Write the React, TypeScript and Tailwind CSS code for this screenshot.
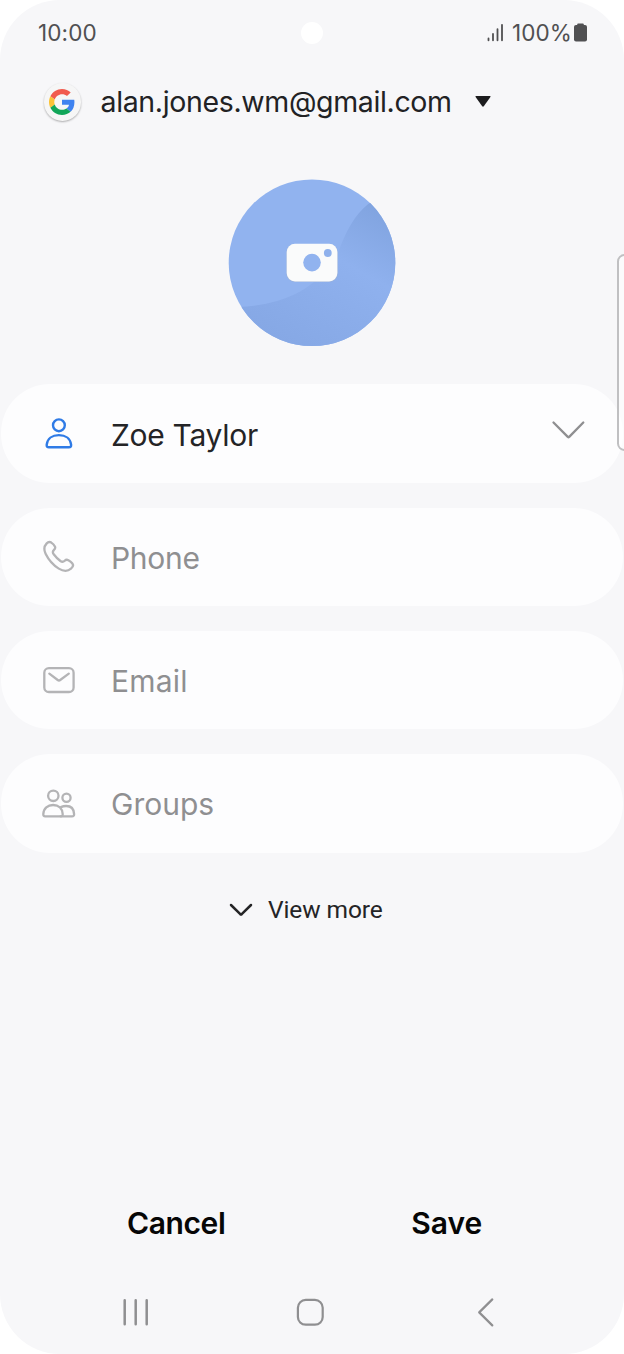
import React, { useState } from "react";

interface Field {
  key: string;
  placeholder: string;
  icon: React.ReactNode;
  spacing: string;
}

const PersonIcon = () => (
  <svg width="36" height="36" viewBox="0 0 36 36" fill="none" stroke="#2f7be6" strokeWidth="2.4" strokeLinejoin="round">
    <circle cx="18.9" cy="9.3" r="5.9" />
    <path d="M9 31.3H28.8C30.6 31.3 31.3 30.4 31.1 28.6C30.4 22.7 25.6 19.1 18.9 19.1S7.4 22.7 6.7 28.6C6.5 30.4 7.2 31.3 9 31.3Z" />
  </svg>
);

const PhoneIcon = () => (
  <svg width="36" height="36" viewBox="0 0 36 36" fill="none" stroke="#b4b4b6" strokeWidth="2.3" strokeLinecap="round" strokeLinejoin="round">
    <path d="M11.3 3.6C9.7 2.6 8 3 6.5 4.6C4 7.3 3.8 10.9 5.6 14.7C8.5 20.6 13.1 26 18.8 29.6C23 32.2 27.6 32.6 31 29.7C33.3 27.8 33.6 25.9 32.2 24.2C31.1 22.9 29.9 22 28.4 21.2C26.9 20.4 25.8 20.6 24.7 21.7C23.3 23.1 22 23.2 20.4 22C18 20.2 15.6 17.7 13.7 15.2C12.4 13.5 12.6 12.2 14 10.9C15.2 9.8 15.6 8.9 14.9 7.5C14.1 5.9 12.8 4.6 11.3 3.6Z" />
  </svg>
);

const MailIcon = () => (
  <svg width="36" height="36" viewBox="0 0 36 36" fill="none" stroke="#b4b4b6" strokeWidth="2.3" strokeLinecap="round" strokeLinejoin="round">
    <rect x="4.3" y="6.2" width="29.3" height="23.8" rx="4.6" />
    <path d="M9.3 11.6L17.7 18Q19 19 20.2 18L28.8 11.6" />
  </svg>
);

const GroupIcon = () => (
  <svg width="36" height="36" viewBox="0 0 36 36" fill="none" stroke="#b4b4b6" strokeWidth="2.3" strokeLinecap="round" strokeLinejoin="round">
    <circle cx="13.3" cy="10.8" r="5.2" />
    <circle cx="26.5" cy="12.7" r="4.1" />
    <path d="M5.2 31.3H20.6C22.1 31.3 22.8 30.6 22.7 29.1C22.4 23.5 18.5 20 13.1 20S3.6 23.5 3.3 29.1C3.2 30.6 3.8 31.3 5.2 31.3Z" />
    <path d="M20.9 22.1C22.6 21.3 24.2 21 26.2 21C30.9 21 33.9 23.8 34.1 29.1C34.2 30.6 33.5 31.3 32 31.3H20.6" />
  </svg>
);

const GoogleLogo = () => (
  <svg width="26" height="26" viewBox="0 0 48 48">
    <path fill="#f15b4e" d="M24 9.5c3.54 0 6.71 1.22 9.21 3.6l6.85-6.85C35.9 2.38 30.47 0 24 0 14.62 0 6.51 5.38 2.56 13.22l7.98 6.19C12.43 13.72 17.74 9.5 24 9.5z" />
    <path fill="#3f83f0" d="M46.98 24.55c0-1.57-.15-3.09-.38-4.55H24v9.02h12.94c-.58 2.96-2.26 5.48-4.78 7.18l7.73 6c4.51-4.18 7.09-10.36 7.09-17.65z" />
    <path fill="#fbc338" d="M10.53 28.59c-.48-1.45-.76-2.99-.76-4.59s.27-3.14.76-4.59l-7.98-6.19C.92 16.46 0 20.12 0 24c0 3.88.92 7.54 2.56 10.78l7.97-6.19z" />
    <path fill="#11a658" d="M24 48c6.48 0 11.93-2.13 15.89-5.81l-7.73-6c-2.15 1.45-4.92 2.3-8.16 2.3-6.26 0-11.57-4.22-13.47-9.91l-7.98 6.19C6.51 42.62 14.62 48 24 48z" />
  </svg>
);

const fields: Field[] = [
  { key: "phone", placeholder: "Phone", icon: <PhoneIcon />, spacing: "tracking-[-0.3px]" },
  { key: "email", placeholder: "Email", icon: <MailIcon />, spacing: "tracking-[0.2px]" },
  { key: "groups", placeholder: "Groups", icon: <GroupIcon />, spacing: "tracking-[0px]" },
];

function StatusBar() {
  return (
    <div className="flex h-[66px] items-center justify-between pr-[37px] pl-[38px] text-[#505052]">
      <span className="w-[120px] text-[22.5px] tracking-[0.1px]">10:00</span>
      <span className="mr-px size-[22px] rounded-full bg-white" />
      <div className="flex w-[120px] items-center justify-end">
        <svg width="18" height="20" viewBox="0 0 18 20" fill="none" stroke="#505052" strokeWidth="1.8" strokeLinecap="round" className="mr-[7px] shrink-0">
          <path d="M1.5 15.5V17.3M6 11V17.3M10.5 6.2V17.3M15 1.8V17.3" />
        </svg>
        <span className="text-[22.5px] tracking-[0.1px]">100%</span>
        <svg width="13" height="20" viewBox="0 0 13 20" fill="#505052" className="ml-[2px] shrink-0">
          <rect x="3.2" y="0.5" width="6.6" height="4" rx="1" />
          <rect x="0" y="2" width="13" height="16.5" rx="2" />
        </svg>
      </div>
    </div>
  );
}

function Avatar() {
  return (
    <button className="mx-auto mt-[39px] block size-[168px]">
      <svg width="168" height="168" viewBox="0 0 168 168">
        <defs>
          <clipPath id="avatar-clip">
            <circle cx="84" cy="83.7" r="83.3" />
          </clipPath>
          <linearGradient id="avatar-shade" x1="160" y1="25" x2="75" y2="175" gradientUnits="userSpaceOnUse">
            <stop offset="0" stopColor="#7fa2de" />
            <stop offset="0.42" stopColor="#8fb1ee" />
            <stop offset="1" stopColor="#86a8e5" />
          </linearGradient>
        </defs>
        <g clipPath="url(#avatar-clip)">
          <rect width="168" height="168" fill="#91b3ef" />
          <path d="M145 22C131 30 121 46 113 66C105 88 91 101 73 112C53 123 32 127 10 128V168H168V20Z" fill="url(#avatar-shade)" />
        </g>
        <rect x="58.4" y="65" width="51.3" height="38" rx="8.5" fill="#9fb3d6" />
        <rect x="58.7" y="64.8" width="50.7" height="37.6" rx="8.3" fill="#fafbfb" />
        <circle cx="84" cy="83.6" r="8.8" fill="#91b3ef" />
        <circle cx="99.8" cy="74" r="3.9" fill="#8fb1ec" />
      </svg>
    </button>
  );
}

export default function App() {
  const [name, setName] = useState("Zoe Taylor");
  const [values, setValues] = useState<Record<string, string>>({});

  return (
    <div className="h-[1354px] w-[624px] bg-white">
      <div className="relative flex h-full flex-col overflow-hidden rounded-[60px] bg-[#f7f7f9] font-[Inter,sans-serif]">
        <StatusBar />

        <button className="flex h-[74px] items-center pb-[2px] pl-[43.5px] text-left">
          <span className="flex size-[37.5px] items-center justify-center rounded-full bg-[#f6f6f6] shadow-[0_1px_2px_rgba(0,0,0,0.3)]">
            <GoogleLogo />
          </span>
          <span className="ml-[19.5px] text-[28.5px] tracking-[-0.35px] text-[#222224]">alan.jones.wm@gmail.com</span>
          <svg width="16" height="11" viewBox="0 0 16 11" fill="#1c1c1e" className="mb-[2px] ml-[23px]">
            <path d="M1 0H15Q16 0 15.4 1L8.8 10.3Q8 11.2 7.2 10.3L0.6 1Q0 0 1 0Z" />
          </svg>
        </button>

        <Avatar />

        <div className="mt-[37.4px] flex flex-col gap-[24.9px] px-px">
          <div className="flex h-[98.4px] items-center rounded-[49px] bg-[#fdfdfe] pr-[38px] pl-[39px]">
            <PersonIcon />
            <input
              value={name}
              onChange={(e) => setName(e.target.value)}
              className="ml-[35px] min-w-0 flex-1 pt-[3px] text-[30px] tracking-[-0.3px] text-[#242426] outline-none"
            />
            <svg width="34" height="20" viewBox="0 0 34 20" fill="none" stroke="#8f8f91" strokeWidth="2.3" strokeLinecap="round" strokeLinejoin="round" className="mb-2">
              <path d="M2.5 2.5L16.8 16.9Q17.5 17.5 18.2 16.9L32.3 2.5" />
            </svg>
          </div>
          {fields.map(f => (
            <div key={f.key} className="flex h-[98.4px] items-center rounded-[49px] bg-[#fdfdfe] pr-[38px] pl-[39px]">
              {f.icon}
              <input
                value={values[f.key] || ""}
                placeholder={f.placeholder}
                onChange={(e) => setValues(prev => ({ ...prev, [f.key]: e.target.value }))}
                className={`ml-[35px] min-w-0 flex-1 pt-[3px] text-[30px] outline-none placeholder:text-[#8f8f91] ${f.spacing}`}
              />
            </div>
          ))}
        </div>

        <button className="mt-[37px] flex h-10 items-center pl-[228.5px] text-[#242426]">
          <svg width="24" height="14" viewBox="0 0 24 14" fill="none" stroke="#242426" strokeWidth="2.5" strokeLinecap="round" strokeLinejoin="round">
            <path d="M2 2L11.3 11.2Q12 11.8 12.7 11.2L22 2" />
          </svg>
          <span className="ml-[15.5px] pt-px font-[Roboto,sans-serif] text-[24.5px] tracking-[-0.1px]">View more</span>
        </button>

        <div className="mt-auto grid h-[94px] grid-cols-2 items-center pr-[42px] pl-[41px] text-[30px] font-semibold text-[#060606]">
          <button className="tracking-[-0.4px]">Cancel</button>
          <button>Save</button>
        </div>

        <div className="flex h-[84px] items-center pl-[121px]">
          <svg width="30" height="30" viewBox="0 0 30 30" fill="none" stroke="#8f8f91" strokeWidth="2.5" strokeLinecap="round">
            <path d="M3.7 3.3V27.2M14.7 3.3V27.2M25.7 3.3V27.2" />
          </svg>
          <svg width="30" height="30" viewBox="0 0 30 30" fill="none" stroke="#8f8f91" strokeWidth="2.2" className="ml-[144px]">
            <rect x="2.9" y="2.9" width="24.8" height="24.8" rx="7.8" />
          </svg>
          <svg width="20" height="30" viewBox="0 0 20 30" fill="none" stroke="#8f8f91" strokeWidth="2.2" strokeLinecap="round" strokeLinejoin="round" className="ml-[151px]">
            <path d="M16.3 2.4L3.2 15.4L16.3 28.4" />
          </svg>
        </div>

        {/* edge panel handle */}
        <div className="absolute top-[254px] -right-2 h-[197px] w-[15.5px] rounded-lg border-2 border-[#c0c0c2] bg-white/50" />
      </div>
    </div>
  );
}
